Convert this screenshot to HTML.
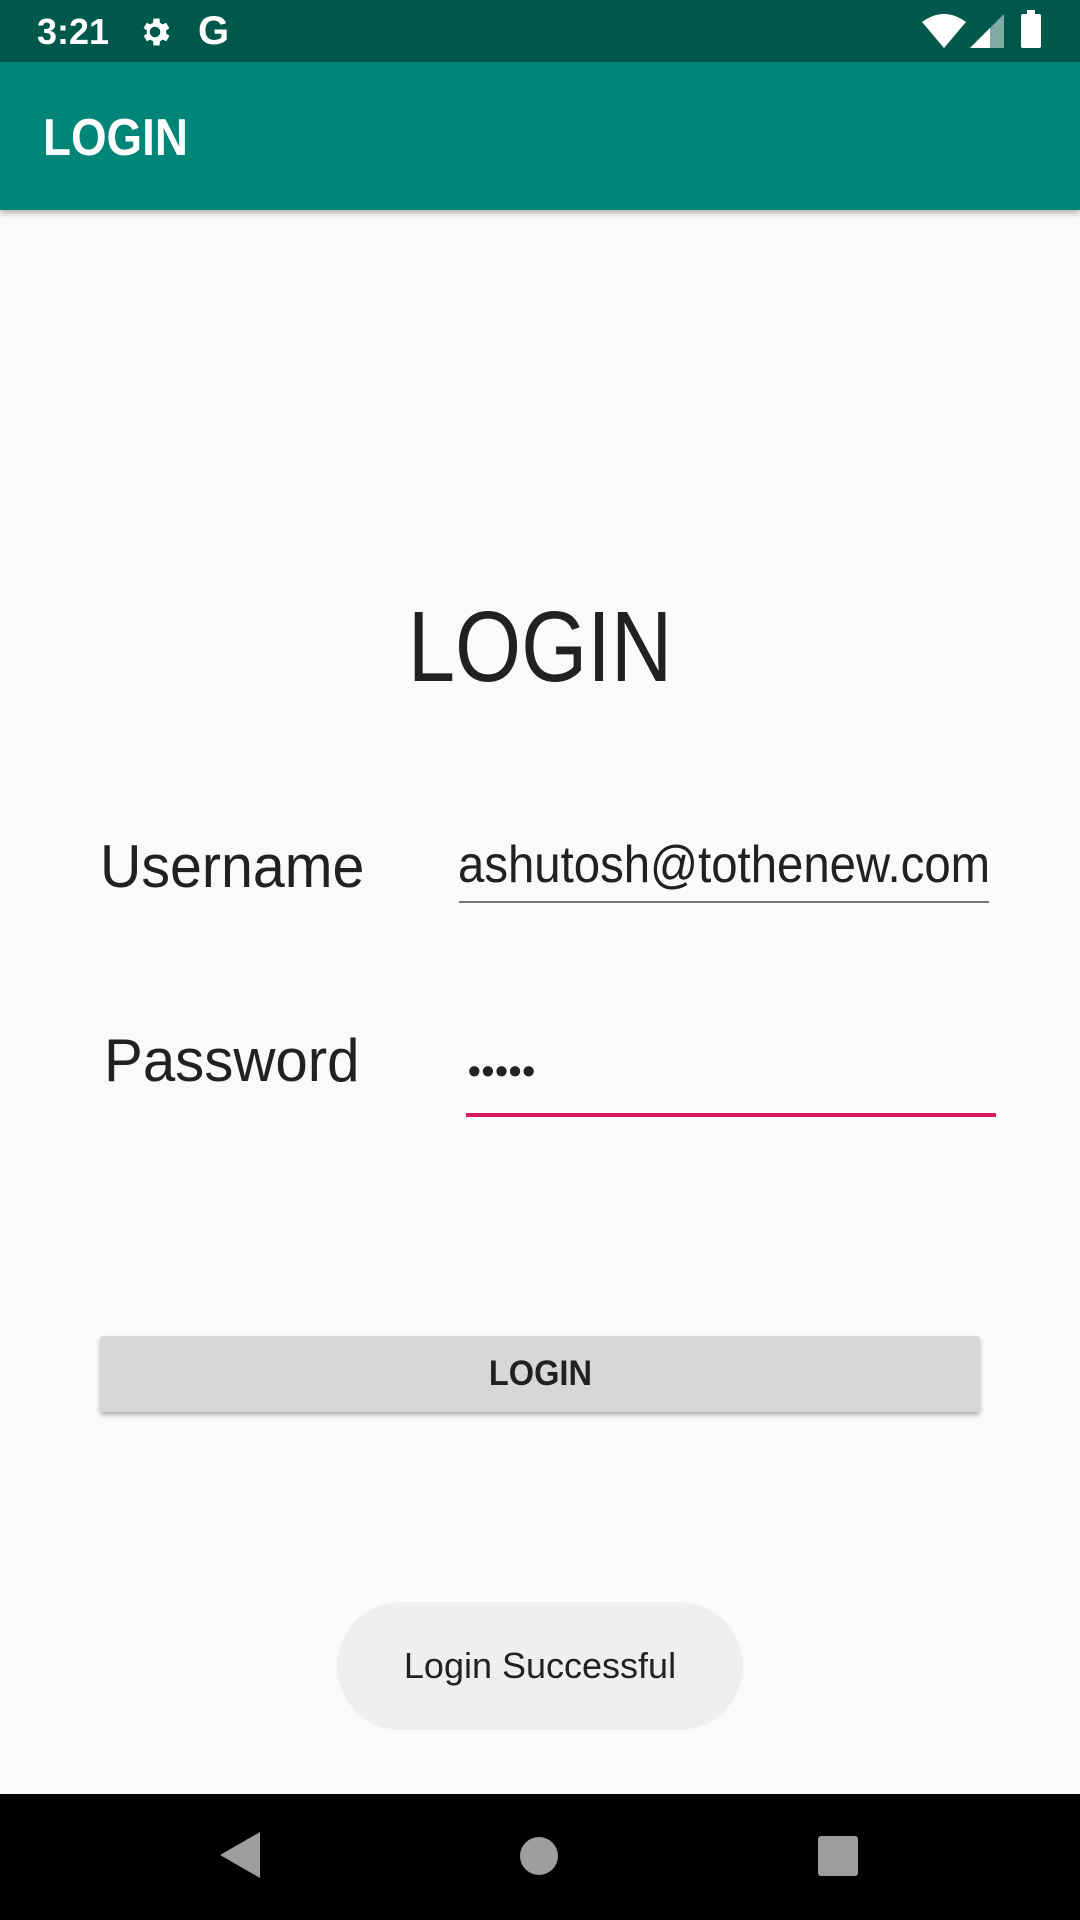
<!DOCTYPE html>
<html><head><meta charset="utf-8"><style>
*{margin:0;padding:0;box-sizing:border-box}
body{width:1080px;height:1920px;background:#fafafa;font-family:"Liberation Sans",Roboto,sans-serif;position:relative;overflow:hidden;color:#212121}
.abs{position:absolute}
.sx{transform-origin:left center}
#sb{left:0;top:0;width:1080px;height:62px;background:#00574b;color:#fff}
#ab{left:0;top:62px;width:1080px;height:148px;background:#008577;box-shadow:0 3px 6px rgba(0,0,0,.3)}
#nav{left:0;top:1794px;width:1080px;height:126px;background:#000}
</style></head><body>
<div id="sb" class="abs">
 <div class="abs" style="left:37px;top:11px;font-size:36px;font-weight:bold;">3:21</div>
 <svg class="abs" style="left:137px;top:14px" width="36" height="36" viewBox="0 0 24 24"><path fill="#fff" d="M19.4 13a7.5 7.5 0 000-2l2.1-1.6-2-3.5-2.5 1a7 7 0 00-1.7-1L15 3h-4l-.4 2.9a7 7 0 00-1.7 1l-2.5-1-2 3.5L6.6 11a7.5 7.5 0 000 2l-2.1 1.6 2 3.5 2.5-1a7 7 0 001.7 1L11 21h4l.4-2.9a7 7 0 001.7-1l2.5 1 2-3.5zM12 15.5a3.5 3.5 0 110-7 3.5 3.5 0 010 7z"/></svg>
 <div class="abs" style="left:198px;top:9px;font-size:40px;font-weight:bold">G</div>
 <svg class="abs" style="left:922px;top:14px" width="44" height="34" viewBox="0 0 44 34"><path fill="#fff" d="M0 8 Q22 -8 44 8 L22 34Z"/></svg>
 <svg class="abs" style="left:970px;top:14px" width="34" height="34" viewBox="0 0 34 34"><path fill="#fff" opacity=".5" d="M34 0V34H0Z"/><path fill="#fff" d="M20 14V34H0Z"/></svg>
 <div class="abs" style="left:1021px;top:14px;width:20px;height:34px;background:#fff;border-radius:2px"></div>
 <div class="abs" style="left:1027px;top:10px;width:8px;height:5px;background:#fff"></div>
</div>
<div id="ab" class="abs"><div class="abs sx" style="left:43px;top:46px;font-size:52px;color:#fff;font-weight:bold;transform:scaleX(.88)">LOGIN</div></div>
<div class="abs" style="left:0;width:1080px;top:590px;text-align:center;font-size:100px;transform:scaleX(.85)">LOGIN</div>
<div class="abs sx" style="left:100px;top:832px;font-size:60px;transform:scaleX(.955)">Username</div>
<div class="abs sx" style="left:458px;top:835px;font-size:52px;transform:scaleX(.91)">ashutosh@tothenew.com</div>
<div class="abs" style="left:459px;top:901px;width:530px;height:2px;background:#757575"></div>
<div class="abs sx" style="left:104px;top:1026px;font-size:60px;transform:scaleX(.97)">Password</div>
<div class="abs" style="left:468px;top:1050px;font-size:36px;font-weight:bold;letter-spacing:1px">•••••</div>
<div class="abs" style="left:466px;top:1113px;width:530px;height:4px;background:#d81b60"></div>
<div class="abs" style="left:100px;top:1336px;width:880px;height:76px;background:#d6d7d7;border-radius:3px;box-shadow:0 3px 5px rgba(0,0,0,.3);text-align:center;line-height:76px;font-size:35px;font-weight:bold"><span style="display:inline-block;transform:scaleX(.93)">LOGIN</span></div>
<div class="abs" style="left:337px;top:1602px;width:406px;height:128px;background:#efefef;border-radius:64px;text-align:center;line-height:128px;font-size:36px;color:#222">Login Successful</div>
<div id="nav" class="abs">
 <svg class="abs" style="left:218px;top:36px" width="44" height="50" viewBox="0 0 44 50"><path fill="#9e9e9e" d="M42 2V48L2 25Z"/></svg>
 <div class="abs" style="left:520px;top:43px;width:38px;height:38px;border-radius:50%;background:#9e9e9e"></div>
 <div class="abs" style="left:818px;top:42px;width:40px;height:40px;border-radius:3px;background:#9e9e9e"></div>
</div>
</body></html>
